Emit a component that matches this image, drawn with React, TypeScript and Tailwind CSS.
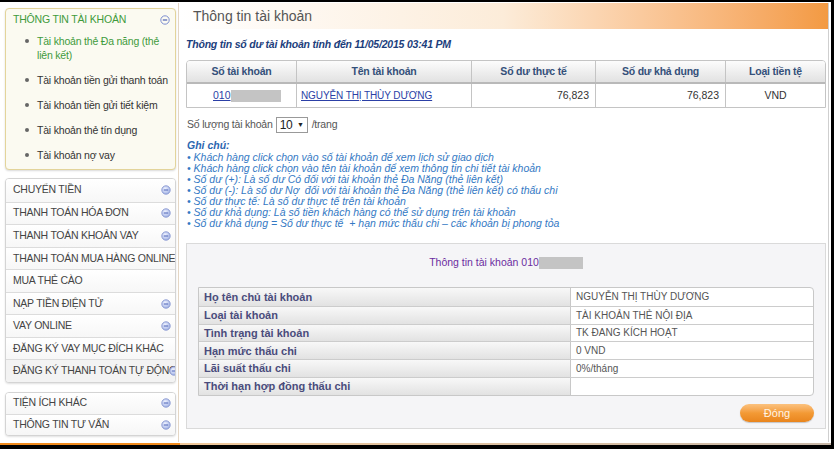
import React from "react";

const MinusIcon = ({ outline = false }: { outline?: boolean }) => (
  <svg width="10" height="10" viewBox="0 0 10 10" className="shrink-0">
    <defs>
      <radialGradient id="mg" cx="40%" cy="35%" r="70%">
        <stop offset="0%" stopColor="#eef2ff" />
        <stop offset="100%" stopColor="#9fb0e4" />
      </radialGradient>
    </defs>
    <circle
      cx="5"
      cy="5"
      r="4.2"
      fill={outline ? "none" : "url(#mg)"}
      stroke={outline ? "#6f82cc" : "#8494d0"}
      strokeWidth="0.9"
    />
    <line x1="2.8" y1="5" x2="7.2" y2="5" stroke="#4d62b5" strokeWidth="1.2" />
  </svg>
);

const GrayMask = ({ w = 40 }: { w?: number }) => (
  <span className="inline-block h-[12px] bg-[#c4c4c4] align-middle" style={{ width: w }} />
);

const accountItems = [
  { label: "Tài khoản thẻ Đa năng (thẻ liên kết)", active: true },
  { label: "Tài khoản tiền gửi thanh toán" },
  { label: "Tài khoản tiền gửi tiết kiệm" },
  { label: "Tài khoản thẻ tín dụng" },
  { label: "Tài khoản nợ vay" },
];

const menuItems = [
  { label: "CHUYỂN TIỀN", icon: true },
  { label: "THANH TOÁN HÓA ĐƠN", icon: true },
  { label: "THANH TOÁN KHOẢN VAY", icon: true },
  { label: "THANH TOÁN MUA HÀNG ONLINE" },
  { label: "MUA THẺ CÀO" },
  { label: "NẠP TIỀN ĐIỆN TỬ", icon: true },
  { label: "VAY ONLINE", icon: true },
  { label: "ĐĂNG KÝ VAY MỤC ĐÍCH KHÁC" },
  { label: "ĐĂNG KÝ THANH TOÁN TỰ ĐỘNG", icon: true, overlap: true },
];

const notes = [
  "Khách hàng click chọn vào số tài khoản để xem lịch sử giao dịch",
  "Khách hàng click chọn vào tên tài khoản để xem thông tin chi tiết tài khoản",
  "Số dư (+): Là số dư Có đối với tài khoản thẻ Đa Năng (thẻ liên kết)",
  "Số dư (-): Là số dư Nợ  đối với tài khoản thẻ Đa Năng (thẻ liên kết) có thấu chi",
  "Số dư thực tế: Là số dư thực tế trên tài khoản",
  "Số dư khả dụng: Là số tiền khách hàng có thể sử dụng trên tài khoản",
  "Số dư khả dụng = Số dư thực tế  + hạn mức thấu chi – các khoản bị phong tỏa",
];

const details = [
  ["Họ tên chủ tài khoản", "NGUYỄN THỊ THÙY DƯƠNG"],
  ["Loại tài khoản", "TÀI KHOẢN THẺ NỘI ĐỊA"],
  ["Tình trạng tài khoản", "TK ĐANG KÍCH HOẠT"],
  ["Hạn mức thấu chi", "0 VND"],
  ["Lãi suất thấu chi", "0%/tháng"],
  ["Thời hạn hợp đồng thấu chi", ""],
];

const Sidebar = () => (
  <div className="w-[178px] shrink-0 pl-[5px] pr-[2px] pt-[6px] flex flex-col">
    {/* Account box */}
    <div className="h-[162px] rounded-[4px] border border-[#e3d49a] bg-[#fbfaf1] shadow-[0_1px_2px_rgba(0,0,0,0.15)] pl-[7px] pr-[4px] pt-[4px]">
      <div className="flex items-center justify-between h-[14px] pr-[1px]">
        <span className="text-[10.5px] tracking-[-0.2px] text-[#3f9a3c]">THÔNG TIN TÀI KHOẢN</span>
        <MinusIcon outline />
      </div>
      <ul className="mt-[7px] flex flex-col gap-[11px]">
        {accountItems.map((it) => (
          <li key={it.label} className="flex items-start text-[10.5px] tracking-[-0.2px] leading-[14px]">
            <span className="w-[4px] h-[4px] rounded-full bg-[#666] mt-[5px] ml-[12px] mr-[8px] shrink-0" />
            <span className={it.active ? "text-[#3f9a3c] pr-[4px]" : "text-[#333]"}>{it.label}</span>
          </li>
        ))}
      </ul>
    </div>

    {/* Main menu */}
    <div className="mt-[8px] h-[205px] rounded-[4px] border border-[#d4d4d4] bg-white shadow-[0_1px_2px_rgba(0,0,0,0.12)] overflow-hidden flex flex-col">
      {menuItems.map((it, i) => (
        <div
          key={it.label}
          className={`flex items-center justify-between h-[22.75px] pl-[7px] pr-[4px] text-[10.5px] tracking-[-0.25px] text-[#444] whitespace-nowrap ${
            i > 0 ? "border-t border-[#dcdcdc]" : ""
          } ${i === menuItems.length - 1 ? "bg-[#f3f3f3]" : "bg-gradient-to-b from-white to-[#f7f7f7]"}`}
        >
          <span>{it.label}</span>
          {it.icon && (
            <span className={it.overlap ? "-ml-[8px]" : ""}>
              <MinusIcon />
            </span>
          )}
        </div>
      ))}
    </div>

    {/* Extras */}
    <div className="mt-[9px] h-[44px] rounded-[4px] border border-[#d4d4d4] bg-white shadow-[0_1px_2px_rgba(0,0,0,0.12)] overflow-hidden flex flex-col">
      {["TIỆN ÍCH KHÁC", "THÔNG TIN TƯ VẤN"].map((l, i) => (
        <div
          key={l}
          className={`flex items-center justify-between flex-1 pl-[7px] pr-[4px] text-[10.5px] tracking-[-0.25px] text-[#444] bg-gradient-to-b from-white to-[#f6f6f6] ${
            i > 0 ? "border-t border-[#dcdcdc]" : ""
          }`}
        >
          <span>{l}</span>
          <MinusIcon />
        </div>
      ))}
    </div>
  </div>
);

const MainPanel = () => (
  <div className="flex-1 mr-[2px] mt-[1px] h-[439px] border-l border-r border-[#e4d6c4] border-r-[#cfcfcf] bg-white flex flex-col">
    {/* Header */}
    <div className="h-[26px] shrink-0 bg-gradient-to-r from-white via-[#fcecd9] to-[#f39a42] flex items-center pl-[14px]">
      <span className="text-[14px] text-[#555]">Thông tin tài khoản</span>
    </div>

    <div className="pl-[7px] pr-[2px] flex flex-col">
      <div className="mt-[9px] h-[12px] text-[10.5px] leading-[12px] font-bold italic text-[#1c3e7c] tracking-[-0.2px]">
        Thông tin số dư tài khoản tính đến 11/05/2015 03:41 PM
      </div>

      {/* Balance table */}
      <div className="mt-[10px] rounded-t-[4px] border border-[#c4c4c4] overflow-hidden">
        <div className="flex h-[23px] bg-gradient-to-b from-[#fcfcfc] to-[#e2e2e2] border-b-2 border-[#b9b9b9] text-[10.5px] tracking-[-0.2px] font-bold text-[#34507a]">
          <div className="w-[110px] flex items-center justify-center border-r border-[#c4c4c4]">Số tài khoản</div>
          <div className="w-[175px] flex items-center justify-center border-r border-[#c4c4c4]">Tên tài khoản</div>
          <div className="w-[124px] flex items-center justify-center border-r border-[#c4c4c4]">Số dư thực tế</div>
          <div className="w-[130px] flex items-center justify-center border-r border-[#c4c4c4]">Số dư khả dụng</div>
          <div className="flex-1 flex items-center justify-center">Loại tiền tệ</div>
        </div>
        <div className="flex h-[23px] text-[10.5px] text-[#333]">
          <div className="w-[110px] flex items-center pl-[26px] border-r border-[#c4c4c4]">
            <span className="text-[#2b3fa6] underline">010</span>
            <GrayMask w={50} />
          </div>
          <div className="w-[175px] flex items-center pl-[4px] border-r border-[#c4c4c4]">
            <span className="text-[#2b3fa6] underline text-[10px] tracking-[-0.1px]">NGUYỄN THỊ THÙY DƯƠNG</span>
          </div>
          <div className="w-[124px] flex items-center justify-end pr-[6px] border-r border-[#c4c4c4]">76,823</div>
          <div className="w-[130px] flex items-center justify-end pr-[6px] border-r border-[#c4c4c4]">76,823</div>
          <div className="flex-1 flex items-center justify-center">VND</div>
        </div>
      </div>

      {/* Page size */}
      <div className="mt-[9px] h-[16px] flex items-center text-[10.5px] tracking-[-0.2px] text-[#555]">
        <span className="ml-[1px]">Số lượng tài khoản</span>
        <span className="ml-[3px] w-[32px] h-[16px] border border-[#999] bg-white flex items-center justify-between px-[3px] text-[12px] text-[#222]">
          10
          <span className="text-[7px]">▼</span>
        </span>
        <span className="ml-[4px]">/trang</span>
      </div>

      {/* Notes */}
      <div className="mt-[7px] ml-[1px] text-[10.5px] leading-[11px] italic text-[#3479c4]">
        <div className="font-bold text-[#2c67b0] mb-[1px]">Ghi chú:</div>
        {notes.map((n) => (
          <div key={n} className="whitespace-pre">• {n}</div>
        ))}
      </div>

      {/* Detail panel */}
      <div className="mt-[14px] h-[186px] border border-[#dadada] bg-[#f5f5f7] flex flex-col px-[11px]">
        <div className="mt-[12px] h-[13px] flex items-center justify-center text-[10.5px] text-[#6b2ca0]">
          <span>Thông tin tài khoản 010</span>
          <GrayMask w={44} />
        </div>
        <div className="mt-[18px] border border-[#c8c8c8] rounded-r-[4px] overflow-hidden bg-white">
          {details.map(([k, v], i) => (
            <div key={k} className={`flex h-[17.8px] ${i > 0 ? "border-t border-[#cccccc]" : ""}`}>
              <div className="w-[372px] border-r border-[#c8c8c8] bg-gradient-to-b from-[#f8f8f8] to-[#e2e2e2] flex items-center pl-[5px] text-[11px] font-bold text-[#4a4c7c]">
                {k}
              </div>
              <div className="flex-1 flex items-center pl-[5px] text-[10px] text-[#555]">{v}</div>
            </div>
          ))}
        </div>
        <div className="mt-[8px] flex justify-end">
          <button className="w-[74px] h-[18px] rounded-full bg-gradient-to-b from-[#fbc27e] via-[#f39a35] to-[#e9851d] text-[11px] text-[#fff4e6] shadow-[0_1px_1px_rgba(0,0,0,0.2)]">
            Đóng
          </button>
        </div>
      </div>
    </div>
  </div>
);

export default function App() {
  return (
    <div className="w-[834px] h-[449px] bg-black overflow-hidden font-['Liberation_Sans',Arial,sans-serif]">
      <div className="h-[2px]" />
      <div className="mr-[3px] h-[441px] bg-white flex">
        <Sidebar />
        <MainPanel />
      </div>
      <div className="mr-[3px] h-[2px] flex">
        <div className="w-[180px] bg-[#f08a1c]" />
        <div className="flex-1 bg-gradient-to-r from-[#f0c89a] to-[#c8b8a8]" />
      </div>
    </div>
  );
}
